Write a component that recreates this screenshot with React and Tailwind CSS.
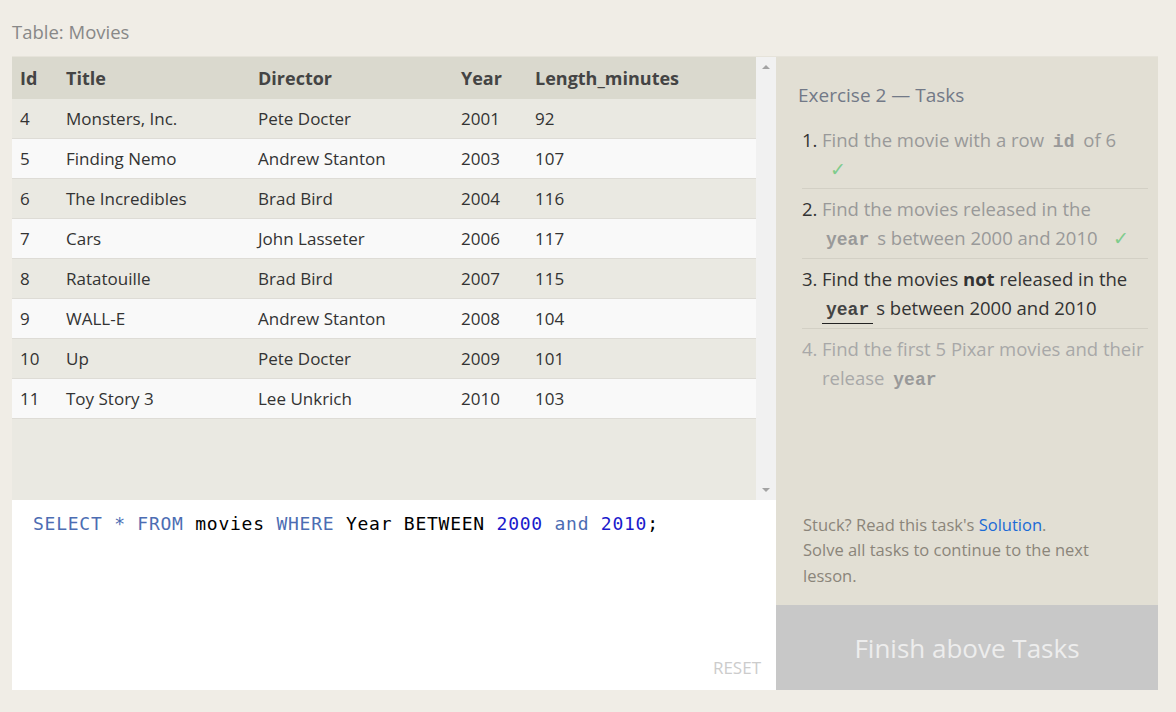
import React from "react";

const MOVIES = [
  [4, "Monsters, Inc.", "Pete Docter", 2001, 92],
  [5, "Finding Nemo", "Andrew Stanton", 2003, 107],
  [6, "The Incredibles", "Brad Bird", 2004, 116],
  [7, "Cars", "John Lasseter", 2006, 117],
  [8, "Ratatouille", "Brad Bird", 2007, 115],
  [9, "WALL-E", "Andrew Stanton", 2008, 104],
  [10, "Up", "Pete Docter", 2009, 101],
  [11, "Toy Story 3", "Lee Unkrich", 2010, 103],
];

const COLS = [
  { label: "Id", w: "w-[46px]" },
  { label: "Title", w: "w-[192px]" },
  { label: "Director", w: "w-[203px]" },
  { label: "Year", w: "w-[74px]" },
  { label: "Length_minutes", w: "flex-1" },
];

function Code({ children, dark }) {
  return (
    <code
      className={`mx-[4px] font-bold text-[18px] leading-none font-['Liberation_Mono',monospace] ${
        dark ? "text-[#444]" : "text-[#999]"
      }`}
    >
      {children}
    </code>
  );
}

function Check({ className }) {
  return <span className={`leading-none text-[#7fcc8c] ${className}`}>✓</span>;
}

function MoviesTable() {
  return (
    <div className="flex h-[443px]">
      <div className="flex w-[744px] flex-col bg-[#eae9e2]">
        <div className="flex h-[42px] items-center bg-[#dad9ce] text-[18px] font-bold text-[#444]">
          {COLS.map((c) => (
            <div key={c.label} className={`${c.w} pl-[8px]`}>
              {c.label}
            </div>
          ))}
        </div>
        {MOVIES.map((row, i) => (
          <div
            key={row[0]}
            className={`flex h-[40px] items-center border-b border-[#dedcd6] text-[17px] text-[#333] ${
              i % 2 ? "bg-[#f9f9f9]" : "bg-[#eae9e2]"
            }`}
          >
            {row.map((v, j) => (
              <div key={j} className={`${COLS[j].w} pl-[8px]`}>
                {v}
              </div>
            ))}
          </div>
        ))}
      </div>
      {/* scrollbar */}
      <div className="flex w-[20px] flex-col items-center justify-between bg-[#f1f1f1] py-[8px]">
        <div className="h-0 w-0 border-x-[4px] border-b-[4px] border-x-transparent border-b-[#a3a3a3]" />
        <div className="h-0 w-0 border-x-[4px] border-t-[4px] border-x-transparent border-t-[#a3a3a3]" />
      </div>
    </div>
  );
}

function Editor() {
  const kw = "text-[#4c6db3]";
  const num = "text-[#1a1acc]";
  return (
    <div className="relative flex-1 bg-white">
      <pre className="px-[21px] pt-[13px] text-[18px] leading-[22px] tracking-[0.75px] text-black font-['DejaVu_Sans_Mono',monospace]">
        <span className={kw}>SELECT</span> <span className={kw}>*</span>{" "}
        <span className={kw}>FROM</span> movies <span className={kw}>WHERE</span> Year BETWEEN{" "}
        <span className={num}>2000</span> <span className={kw}>and</span>{" "}
        <span className={num}>2010</span>;
      </pre>
      <button className="absolute bottom-[10px] right-[15px] text-[17px] uppercase text-[#cccccc]">
        Reset
      </button>
    </div>
  );
}

function Tasks() {
  return (
    <div className="flex w-[382px] flex-col bg-[#e2dfd4]">
      <div className="flex-1 pl-[22px] pr-[10px] pt-[23px]">
        <h2 className="text-[19px] leading-[30px] text-[#727987]">Exercise 2 — Tasks</h2>
        <ol className="mt-[9px] pl-[4px] text-[18.5px] leading-[29px]">
          <li className="flex border-b border-[#d3d0c5] pb-[5px] pt-[5.5px]">
            <span className="w-[20px] shrink-0 text-[#333]">1.</span>
            <span className="text-[#999]">
              Find the movie with a row <Code>id</Code> of 6
              <br />
              <Check className="ml-[8px]" />
            </span>
          </li>
          <li className="flex border-b border-[#d3d0c5] py-[5.5px]">
            <span className="w-[20px] shrink-0 text-[#333]">2.</span>
            <span className="text-[#999]">
              Find the movies released in the <Code>year</Code>
              <span className="ml-[4px]">s between 2000 and 2010</span>
              <Check className="ml-[15px]" />
            </span>
          </li>
          <li className="flex border-b border-[#d3d0c5] py-[5.5px]">
            <span className="w-[20px] shrink-0 text-[#333]">3.</span>
            <span className="text-[#333]">
              Find the movies <b>not</b> released in the{" "}
              <span className="border-b-[1.5px] border-[#222] pb-[3px] leading-none">
                <Code dark>year</Code>
              </span>
              <span className="ml-[3px]">s between 2000 and 2010</span>
            </span>
          </li>
          <li className="flex py-[5.5px]">
            <span className="w-[20px] shrink-0 text-[#a8a8a8]">4.</span>
            <span className="text-[#a8a8a8]">
              Find the first 5 Pixar movies and their release <Code>year</Code>
            </span>
          </li>
        </ol>
      </div>
      <div className="px-[27px] pb-[17px] text-[16.5px] leading-[25.5px] text-[#8b857a]">
        Stuck? Read this task's <a className="text-[#1b6ad6]">Solution</a>.
        <br />
        Solve all tasks to continue to the next lesson.
      </div>
      <div className="flex h-[85px] items-center justify-center bg-[#c8c8c8] pt-[2px] text-[26px] text-[#ededed]">
        Finish above Tasks
      </div>
    </div>
  );
}

export default function App() {
  return (
    <div className="h-[712px] w-[1176px] bg-[#f0ede6] pl-[12px] pr-[18px] font-['Open_Sans',sans-serif]">
      <div className="flex h-[56px] items-center pt-[8px] text-[18.5px] text-[#888]">Table: Movies</div>
      <div className="flex h-[634px] border-t border-[#e6e3da]">
        <div className="flex w-[764px] flex-col">
          <MoviesTable />
          <Editor />
        </div>
        <Tasks />
      </div>
    </div>
  );
}
